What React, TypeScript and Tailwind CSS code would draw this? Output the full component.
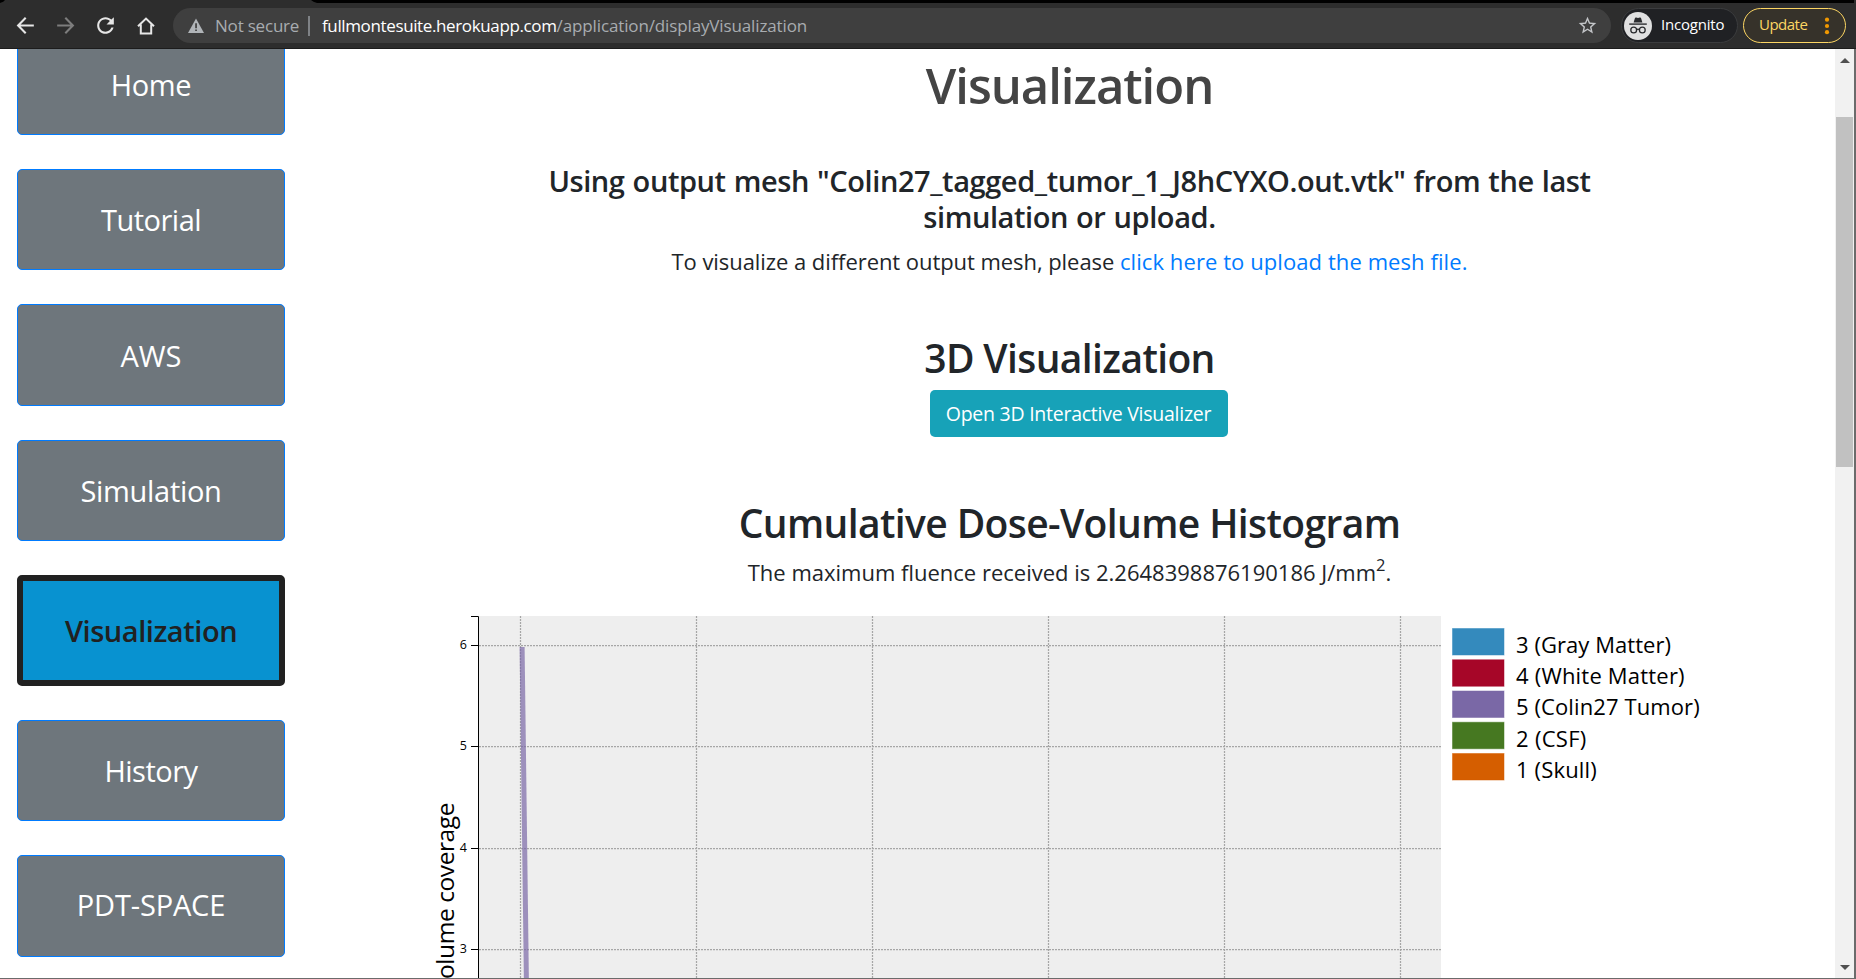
import React from "react";

const navItems = [
  { label: "Home", style: "tracking-[-0.4px] pt-[2px]" },
  { label: "Tutorial", style: "tracking-[-0.5px]" },
  { label: "AWS", style: "tracking-[0px] pt-[2px]" },
  { label: "Simulation", style: "tracking-[-0.3px]" },
  { label: "Visualization", style: "tracking-[-0.45px]", active: true },
  { label: "History", style: "tracking-[-0.5px]" },
  { label: "PDT-SPACE", style: "tracking-[-0.17px] pb-[2px]" },
];

const legend = [
  { label: "3 (Gray Matter)", color: "#348abd", spacing: 0.05 },
  { label: "4 (White Matter)", color: "#a60628", spacing: 0.2 },
  { label: "5 (Colin27 Tumor)", color: "#7a68a6", spacing: 0.1 },
  { label: "2 (CSF)", color: "#467821", spacing: 0.3 },
  { label: "1 (Skull)", color: "#d55e00", spacing: 0.15 },
];

function BrowserBar() {
  return (
    <header className="flex h-[49px] shrink-0 flex-col border-b border-[#1c1c1c] bg-[#2d2d2d]">
      <svg className="h-[3px] w-full shrink-0" viewBox="0 0 1856 3" preserveAspectRatio="none">
        <path d="M0 0H5Q4 2 0 3Z" fill="#000" />
        <path d="M311 0H1854V3H317Q313 2 311 0Z" fill="#000" />
      </svg>
      <div className="flex flex-1 items-center pl-[6px]">
        <div className="flex w-10 justify-center pr-px">
          <svg width="25" height="25" viewBox="0 0 24 24" fill="none" stroke="#e6e6e6" strokeWidth="2">
            <path d="M20 12H5.2M12.2 4.6L4.9 12l7.3 7.4" />
          </svg>
        </div>
        <div className="flex w-10 justify-center pr-px">
          <svg width="25" height="25" viewBox="0 0 24 24" fill="none" stroke="#7d7d7d" strokeWidth="2">
            <path d="M4 12H18.8M11.8 4.6L19.1 12l-7.3 7.4" />
          </svg>
        </div>
        <div className="flex w-10 justify-center pr-px">
          <svg width="25" height="25" viewBox="0 0 24 24" fill="#e6e6e6">
            <path d="M17.65 6.35C16.2 4.9 14.21 4 12 4c-4.42 0-7.99 3.58-7.99 8s3.57 8 7.99 8c3.73 0 6.84-2.55 7.73-6h-2.08c-.82 2.33-3.04 4-5.65 4-3.31 0-6-2.69-6-6s2.69-6 6-6c1.66 0 3.14.69 4.22 1.78L13 11h7V4l-2.35 2.35z" />
          </svg>
        </div>
        <div className="flex w-10 justify-center pr-px">
          <svg width="24" height="24" viewBox="0 0 24 24" fill="none" stroke="#e6e6e6" strokeWidth="2">
            <path d="M4 12.2L12 4.6l8 7.6M6.8 10.5v9h10.4v-9" />
          </svg>
        </div>
        <div className="ml-[7px] flex h-[35px] w-[1438px] items-center rounded-full bg-[#3f3f3f] pl-[14px] pr-[13px] text-[17px] text-[#a8acb0]">
          <svg width="18" height="18" viewBox="0 0 18 18">
            <path d="M9 1.5L17 16H1Z" fill="#b0b4b8" />
            <path d="M8.2 6.2h1.7v5H8.2zM8.2 12.4h1.7v1.7H8.2z" fill="#3f3f3f" />
          </svg>
          <span className="ml-[10px] w-[85px] whitespace-nowrap tracking-[-0.2px]">Not secure</span>
          <span className="ml-[8px] h-5 w-[2px] bg-[#7f8286]" />
          <span className="ml-[12px] whitespace-nowrap tracking-[-0.37px] text-white">
            fullmontesuite.herokuapp.com
          </span>
          <span className="whitespace-nowrap tracking-[-0.13px]">/application/displayVisualization</span>
          <svg className="ml-auto" width="21" height="21" viewBox="0 0 24 24" fill="#c4c6c9">
            <path d="M22 9.24l-7.19-.62L12 2 9.19 8.63 2 9.24l5.46 4.73L5.82 21 12 17.27 18.18 21l-1.63-7.03L22 9.24zM12 15.4l-3.76 2.27 1-4.28-3.32-2.88 4.38-.38L12 6.1l1.71 4.04 4.38.38-3.32 2.88 1 4.28L12 15.4z" />
          </svg>
        </div>
        <div className="ml-[10px] flex h-[35px] w-[117px] items-center rounded-full border border-[#3b3c3e] bg-[#202124] pl-[2px]">
          <svg width="28" height="28" viewBox="0 0 28 28">
            <circle cx="14" cy="14" r="14" fill="#e0e0e0" />
            <path d="M9.6 10.4l1.3-4.2q.3-1 1.3-.7l1.8.5 1.8-.5q1-.3 1.3.7l1.3 4.2z" fill="#2a2b2e" />
            <path d="M5.2 11.4h17.6v1.4H5.2z" fill="#2a2b2e" />
            <g fill="none" stroke="#2a2b2e" strokeWidth="1.3">
              <circle cx="9.7" cy="18" r="2.9" />
              <circle cx="18.3" cy="18" r="2.9" />
              <path d="M12.6 17.6q1.4-.9 2.8 0" />
            </g>
          </svg>
          <span className="ml-[9px] pb-[2px] text-[15px] tracking-[-0.2px] text-white">Incognito</span>
        </div>
        <div className="ml-[5px] flex h-[35px] w-[103px] items-center rounded-full border border-[#fdd663] bg-[#36322a] pl-[15px]">
          <span className="w-[50px] pb-[2px] text-[15px] tracking-[-0.5px] text-[#fdd663]">Update</span>
          <svg className="ml-[15px]" width="6" height="18" viewBox="0 0 6 18" fill="#f29900">
            <circle cx="3" cy="2.7" r="2.1" />
            <circle cx="3" cy="9" r="2.1" />
            <circle cx="3" cy="15.2" r="2.1" />
          </svg>
        </div>
      </div>
    </header>
  );
}

function Sidebar() {
  return (
    <nav className="-mt-[15.6px] flex w-[285px] shrink-0 flex-col gap-[34px] pl-[17px]">
      {navItems.map((item) => (
        <a
          key={item.label}
          className={
            item.active
              ? "flex h-[110.6px] shrink-0 items-center justify-center rounded-[5px] border-6 border-[#212121] bg-[#0892d0] text-[29px] font-semibold text-[#212121] " + item.style
              : "flex h-[101.45px] shrink-0 items-center justify-center rounded-[5px] border border-[#007bff] bg-[#6e767c] text-[29px] text-white " + item.style
          }
        >
          {item.label}
        </a>
      ))}
    </nav>
  );
}

function Histogram() {
  const xs = [520.5, 696.5, 872.5, 1048.5, 1224.5, 1400.5];
  const ys = [
    { y: 645.5, label: "6" },
    { y: 746.5, label: "5" },
    { y: 848.5, label: "4" },
    { y: 949.5, label: "3" },
  ];
  return (
    <svg className="mt-[10px] block shrink-0" width="1380" height="379" viewBox="420 600 1380 379">
      <rect x="479" y="616" width="962" height="363" fill="#eeeeee" />
      <g stroke="#a6a6a6" strokeWidth="1.25" strokeDasharray="2 1">
        {xs.map((x) => (
          <line key={x} x1={x} x2={x} y1="616" y2="979" />
        ))}
        {ys.map((t) => (
          <line key={t.y} x1="479" x2="1441" y1={t.y} y2={t.y} />
        ))}
      </g>
      <path d="M471 616.5H478.5V979" fill="none" stroke="#000" />
      {ys.map((t) => (
        <g key={t.label}>
          <line x1="471" x2="478" y1={t.y} y2={t.y} stroke="#000" />
          <text x="467" y={t.y + 3.8} textAnchor="end" fontSize="12.5">
            {t.label}
          </text>
        </g>
      ))}
      <path d="M522.1 647L526.4 981" stroke="#7a68a6" strokeOpacity="0.7" strokeWidth="5" fill="none" />
      <text transform="translate(453.5 803) rotate(-90)" textAnchor="end" fontSize="24.5" letterSpacing="-0.42">
        Volume coverage
      </text>
      {legend.map((item, i) => (
        <g key={item.label}>
          <rect x="1452.5" y={628.5 + i * 31.25} width="51.5" height="26.5" fill={item.color} stroke={item.color} strokeOpacity="0.5" />
          <text x="1516" y={652.6 + i * 31.3} fontSize="22" letterSpacing={item.spacing}>
            {item.label}
          </text>
        </g>
      ))}
    </svg>
  );
}

function Scrollbar() {
  return (
    <div className="flex w-[21px] shrink-0 border-r-2 border-[#6b6b6b] bg-[#f1f1f1]">
      <div className="flex w-full flex-col items-center pb-[8px] pt-[9px]">
        <svg width="10" height="5" viewBox="0 0 10 5">
          <path d="M5 0L10 5H0Z" fill="#505050" />
        </svg>
        <div className="mt-[54px] h-[350px] w-[17px] bg-[#c1c1c1]" />
        <svg className="mt-auto" width="10" height="5" viewBox="0 0 10 5">
          <path d="M5 5L10 0H0Z" fill="#505050" />
        </svg>
      </div>
    </div>
  );
}

export default function App() {
  return (
    <div className="flex h-[979px] w-[1856px] flex-col overflow-hidden bg-white font-['Open_Sans',sans-serif] text-[#212529]">
      <BrowserBar />
      <div className="flex min-h-0 flex-1 overflow-hidden border-b border-[#6b6b6b]">
        <Sidebar />
        <main className="flex w-[1550px] shrink-0 flex-col overflow-hidden pl-[135px] pt-[6px]">
          <section className="flex w-[1299px] flex-col items-center text-center">
            <h1 className="text-[49px] font-semibold leading-[60px] tracking-[-1.03px] text-[#444444]">Visualization</h1>
            <h4 className="mt-[48px] whitespace-nowrap text-[29px] font-semibold leading-[36px] tracking-[-0.42px] [word-spacing:1px]">
              Using output mesh "Colin27_tagged_tumor_1_J8hCYXO.out.vtk" from the last
              <br />
              simulation or upload.
            </h4>
            <p className="mt-[8.5px] whitespace-nowrap text-[22px] leading-[34px] tracking-[-0.06px]">
              To visualize a different output mesh, please{" "}
              <a className="tracking-[0.08px] text-[#007bff]">click here to upload the mesh file.</a>
            </p>
            <h2 className="mt-[56px] text-[39px] font-semibold leading-[48px] tracking-[-0.62px]">3D Visualization</h2>
            <button className="ml-[18px] mt-[8.5px] h-[47px] w-[298px] whitespace-nowrap rounded-[5px] bg-[#17a2b8] pt-[1px] text-[19.5px] tracking-[-0.25px] text-white">
              Open 3D Interactive Visualizer
            </button>
            <h2 className="mt-[62px] text-[39px] font-semibold leading-[48px] tracking-[-0.62px]">
              Cumulative Dose-Volume Histogram
            </h2>
            <p className="mt-[7.5px] whitespace-nowrap text-[22px] leading-[34px]">
              The maximum fluence received is 2.2648398876190186 J/mm
              <sup className="top-[-0.55em] text-[16.5px]">2</sup>.
            </p>
          </section>
          <div className="mt-px">
            <Histogram />
          </div>
        </main>
        <Scrollbar />
      </div>
    </div>
  );
}
